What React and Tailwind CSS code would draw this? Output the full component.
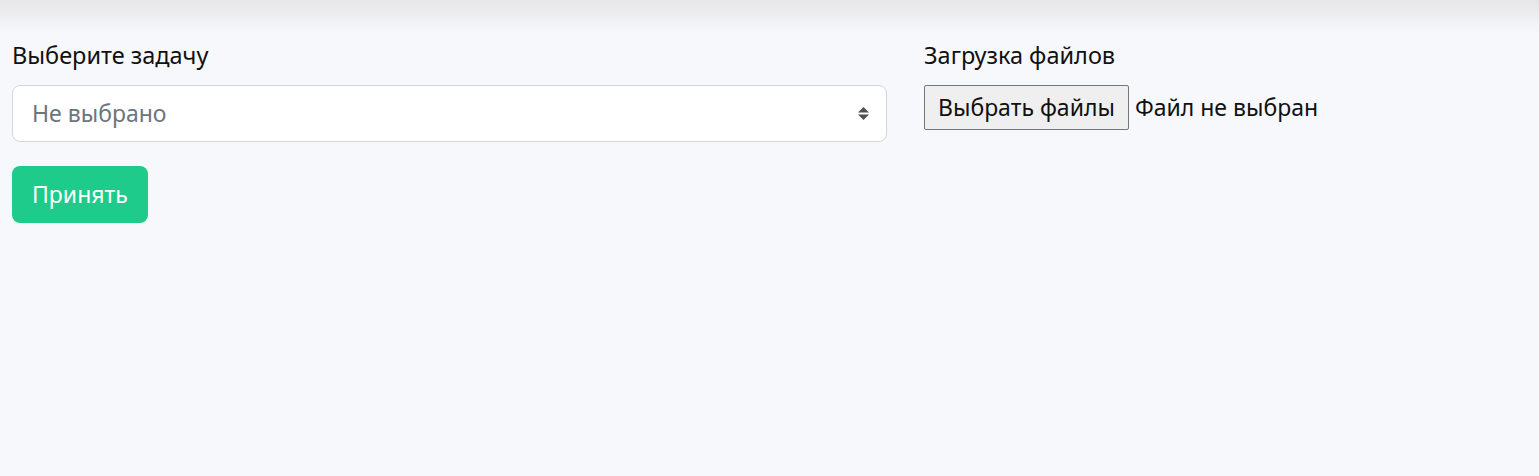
export default function App() {
  return (
    <div className="min-h-[476px] bg-[#f7f8fc] text-[#111]" style={{ fontFamily: "'Noto Sans', sans-serif" }}>
      {/* top shadow from navbar */}
      <div className="h-[34px] bg-gradient-to-b from-[#e6e6e8] to-[#f7f8fc]" />
      <main className="flex px-3 pt-[6px] gap-[37px]">
        <div className="w-[875px] flex flex-col">
          <label className="text-[23.5px] leading-[30px] mb-[15px]">Выберите задачу</label>
          <div className="relative">
            <select className="appearance-none w-full h-[57px] bg-white border border-[#d5d6dc] rounded-[8px] pl-[19px] text-[23px] text-[#6c757d] outline-none">
              <option>Не выбрано</option>
            </select>
            <svg className="absolute right-[17px] top-[21px]" width="13" height="15" viewBox="0 0 13 15">
              <path d="M6.5 1 L12 6.5 H1 Z" fill="#4b4f56" />
              <path d="M6.5 14 L12 8.5 H1 Z" fill="#4b4f56" />
            </svg>
          </div>
          <div className="mt-6">
            <button className="h-[57px] px-5 bg-[#1ecb8b] text-white text-[23px] rounded-[8px]">Принять</button>
          </div>
        </div>
        <div className="flex flex-col">
          <label className="text-[23.5px] leading-[30px] mb-[15px]">Загрузка файлов</label>
          <div className="flex items-center">
            <button className="h-[45px] px-[13px] bg-[#efefef] border border-[#767676] rounded-[2px] text-[23px]">Выбрать файлы</button>
            <span className="ml-[6px] text-[23px]">Файл не выбран</span>
          </div>
        </div>
      </main>
    </div>
  );
}
